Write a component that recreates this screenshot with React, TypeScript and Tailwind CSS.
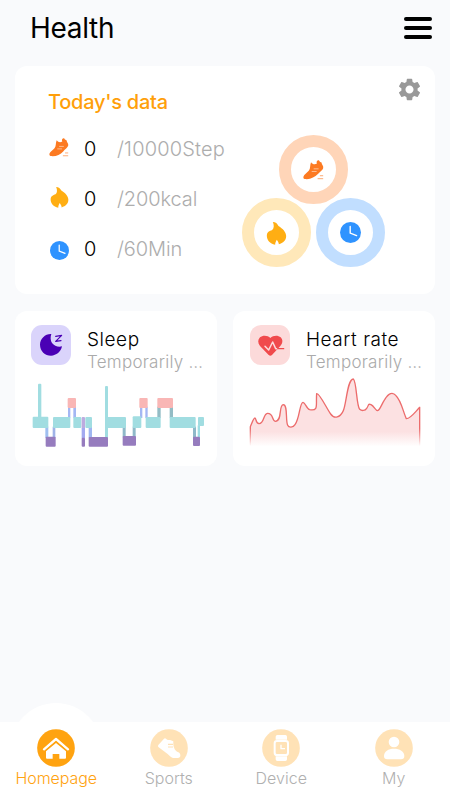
import type { ReactNode } from 'react'
import { MdSettings } from 'react-icons/md'

function ShoeIcon({ className }: { className: string }) {
  return (
    <svg viewBox="221 103 63 61" className={className}>
      <path
        d="M222 153 C224 147 232 143 238 136 C244 129 241 119 245 110 C250 117 257 118 263 114 C260 108 264 103 269 104 C271 110 275 109 277 111 C277 117 284 121 282 128 C280 134 272 139 266 146 C256 156 243 163 226 161 C222 160 221 157 222 153 Z"
        fill="#fc7a22"
      />
      <path d="M253 130 L268 130 M247 138 L262 138" stroke="#ffe3d0" strokeWidth="2" />
      <path d="M272 151 H282 M265 160 H282" stroke="#fc9a5a" strokeWidth="2.6" />
    </svg>
  )
}

function FlameIcon({ className }: { className: string }) {
  return (
    <svg viewBox="109 285 62 72" className={className}>
      <path
        d="M129 288 C137 288 143 293 146 300 C159 308 169 319 169 330 C169 343 160 351 147 355 C147 349 143 345 141 341 C138 346 136 350 136 356 C120 352 111 342 111 329 C111 318 119 315 127 312 C133 307 133 297 129 288 Z"
        fill="#ffae13"
      />
    </svg>
  )
}

function ClockIcon({ className }: { className: string }) {
  return (
    <svg viewBox="0 0 20 20" className={className}>
      <circle cx="10" cy="10" r="10" fill="#2f93ff" />
      <path d="M9.7 4.3 V10.5 L15.8 13" fill="none" stroke="#fff" strokeWidth="1.3" strokeLinecap="round" />
    </svg>
  )
}

const goals = [
  { icon: <ShoeIcon className="mb-1 h-[19px] w-5" />, target: '/10000Step', tracking: 'tracking-[0.15px]' },
  { icon: <FlameIcon className="mb-1 h-[22px] w-[19px]" />, target: '/200kcal', tracking: 'tracking-[-0.1px]' },
  { icon: <ClockIcon className="mt-0.5 h-[19px] w-[19px]" />, target: '/60Min', tracking: 'tracking-[-0.1px]' },
]

function Ring({ className, children }: { className: string; children: ReactNode }) {
  return (
    <div className={`flex h-[69px] w-[69px] shrink-0 items-center justify-center rounded-full border-[12.5px] ${className}`}>
      {children}
    </div>
  )
}

function TodayCard() {
  return (
    <section className="relative flex h-[228px] rounded-xl bg-white">
      <div className="w-[227px] pl-[33px] pt-[22px]">
        <h2 className="h-9 text-[20px] leading-[28px] font-medium tracking-[-0.25px] text-[#ff9f0a]">Today&apos;s data</h2>
        {goals.map((goal) => (
          <div key={goal.target} className="flex h-[50px] items-center whitespace-nowrap">
            <div className="flex w-[22px] justify-center">{goal.icon}</div>
            <span className="ml-[14px] w-[33px] text-[20px] font-[350] text-black">0</span>
            <span className={`text-[20px] font-light text-[#adadad] ${goal.tracking}`}>{goal.target}</span>
          </div>
        ))}
      </div>
      <div className="flex w-[143px] flex-col items-center pt-[69px]">
        <Ring className="border-[#ffd5b8]">
          <ShoeIcon className="h-5 w-[21px]" />
        </Ring>
        <div className="-mt-1.5 flex gap-[5px]">
          <Ring className="border-[#ffe8b9]">
            <FlameIcon className="h-6 w-[21px]" />
          </Ring>
          <Ring className="border-[#c1deff]">
            <ClockIcon className="h-[21px] w-[21px]" />
          </Ring>
        </div>
      </div>
      <button className="absolute right-[12.5px] top-[10px]" aria-label="Settings">
        <MdSettings className="h-[27px] w-[27px] text-[#999]" />
      </button>
    </section>
  )
}

function SleepIcon() {
  return (
    <svg viewBox="63 60 120 120" className="h-10 w-10 shrink-0 rounded-[11px] bg-[#dad4fb]">
      <path d="M124 87 C106 86 90 101 90 119 C90 138 105 152 123 152 C139 152 153 140 156 124 C145 127 133 123 126 114 C121 106 121 96 124 87 Z" fill="#4a00b5" />
      <path d="M137 94 L155 91 L137 109 L153 107" fill="none" stroke="#4a00b5" strokeWidth="3.5" strokeLinecap="round" strokeLinejoin="round" />
    </svg>
  )
}

function HeartIcon() {
  return (
    <svg viewBox="74 60 120 120" className="ml-px h-10 w-10 shrink-0 rounded-[11px] bg-[#fcdada]">
      <path d="M135 99 C128 91 112 90 104 97 C97 104 97 114 104 123 L130 150 Q135 155 140 150 L165 123 C173 114 173 104 166 97 C158 90 143 91 135 99 Z" fill="#f04a4c" />
      <path d="M119 124 L130 135 L142 111 L151 131 H175" fill="none" stroke="#fcdada" strokeWidth="4.5" strokeLinecap="round" strokeLinejoin="round" />
      <path d="M157 131 H175" stroke="#f04a4c" strokeWidth="4" strokeLinecap="round" />
    </svg>
  )
}

// x, y, width, height, colour
const sleepLinks: [number, number, number, number, string][] = [
  [76, 170, 9, 34, '#9fbff0'],
  [98, 170, 8, 34, '#9fb3e8'],
  [144, 110, 7, 34, '#a4b7f3'],
  [160, 110, 8, 34, '#a4b7f3'],
  [206, 170, 10, 34, '#9fb6f1'],
  [308, 170, 9, 32, '#8fb9c9'],
  [338, 170, 9, 32, '#8fb9c9'],
  [360, 110, 7, 34, '#a4b7f3'],
  [376, 110, 7, 34, '#a4b7f3'],
  [412, 110, 10, 34, '#93bcc5'],
  [449, 110, 10, 34, '#93bcc5'],
  [519, 170, 9, 34, '#8fb9c9'],
  [533, 166, 7, 36, '#9edde3'],
]

const sleepBlocks: [number, number, number, number, string][] = [
  [38, 140, 47, 34, '#a1dde1'],
  [54, 41, 10, 132, '#a1dde1'],
  [99, 141, 52, 33, '#a1dde1'],
  [160, 141, 24, 33, '#a1dde1'],
  [196, 141, 20, 33, '#a1dde1'],
  [255, 48, 9, 157, '#a1dde1'],
  [255, 141, 63, 33, '#a1dde1'],
  [338, 139, 26, 35, '#a1dde1'],
  [377, 141, 45, 33, '#a1dde1'],
  [449, 141, 78, 33, '#a1dde1'],
  [534, 141, 18, 27, '#a1dde1'],
  [143, 84, 25, 30, '#f9b6b5'],
  [358, 84, 25, 30, '#f9b6b5'],
  [412, 84, 47, 30, '#f9b6b5'],
  [77, 200, 30, 30, '#967cbe'],
  [206, 201, 58, 29, '#967cbe'],
  [308, 198, 40, 29, '#967cbe'],
  [519, 200, 21, 28, '#967cbe'],
]

function SleepChart() {
  return (
    <svg viewBox="30 24 525 216" className="ml-[15px] mt-1.5 h-[72px] w-[175px]">
      {sleepLinks.map(([x, y, w, h, fill]) => (
        <rect key={`${x}-${y}`} x={x} y={y} width={w} height={h} fill={fill} />
      ))}
      {sleepBlocks.map(([x, y, w, h, fill]) => (
        <rect key={`${x}-${y}`} x={x} y={y} width={w} height={h} rx="3" fill={fill} />
      ))}
      <rect x="185" y="141" width="10" height="35" rx="3" fill="#bdabdf" />
      <rect x="185" y="174" width="10" height="31" fill="#a3aaf0" />
      <rect x="185" y="203" width="10" height="27" rx="3" fill="#967cbe" />
    </svg>
  )
}

const heartLine =
  'M46 228 V170 C51 158 56 143 60 144 C64 146 62 160 72 161 C88 162 84 132 97 130 C117 129 109 152 121 154 C143 153 130 105 145 104 C159 105 151 151 158 166 C161 173 174 174 180 164 C194 146 194 97 204 97 C211 98 215 117 224 119 C252 124 242 105 245 71 C253 68 276 117 287 132 C299 149 315 141 324 124 C334 109 336 27 355 27 C365 34 364 106 374 118 C380 123 390 123 395 115 C402 106 398 100 408 104 C418 109 421 122 428 122 C435 120 440 102 449 89 C461 69 473 65 483 77 C499 92 504 125 514 146 C525 147 536 131 554 112 V228'

function HeartChart() {
  return (
    <svg viewBox="30 18 540 222" className="ml-3 mt-1 h-[74px] w-[180px]">
      <defs>
        <linearGradient id="heartFill" gradientUnits="userSpaceOnUse" x1="0" y1="185" x2="0" y2="230">
          <stop offset="0" stopColor="#fce1e2" />
          <stop offset="1" stopColor="#fce1e2" stopOpacity="0" />
        </linearGradient>
        <linearGradient id="heartStroke" gradientUnits="userSpaceOnUse" x1="0" y1="175" x2="0" y2="228">
          <stop offset="0" stopColor="#ec6c6c" />
          <stop offset="1" stopColor="#ec6c6c" stopOpacity="0" />
        </linearGradient>
      </defs>
      <path d={heartLine} fill="url(#heartFill)" stroke="url(#heartStroke)" strokeWidth="4" strokeLinejoin="round" />
    </svg>
  )
}

function MetricCard({ title, icon, children }: { title: string; icon: ReactNode; children: ReactNode }) {
  return (
    <section className="h-[155px] w-[202px] rounded-xl bg-white">
      <div className="flex h-[61px] gap-4 pl-4 pt-3.5">
        {icon}
        <div className="whitespace-nowrap">
          <h3 className="pt-[2px] text-[19px] leading-[25px] font-[350] tracking-[0.55px] text-black">{title}</h3>
          <p className="text-[17px] leading-[20px] font-light tracking-[0.25px] text-[#aaa]">Temporarily …</p>
        </div>
      </div>
      {children}
    </section>
  )
}

const tabs = [
  {
    label: 'Homepage',
    icon: (
      <>
        <path d="M132 163 L168 132 L204 163" fill="none" stroke="#fff" strokeWidth="7" strokeLinecap="round" strokeLinejoin="round" />
        <path d="M138 169 L168 144 L198 169 V188 Q198 191 195 191 H178 V177 H158 V191 H141 Q138 191 138 188 Z" fill="#fff" />
        <path d="M137 165.5 L168 140 L199 165.5" fill="none" stroke="#ffa310" strokeWidth="2.5" />
      </>
    ),
  },
  {
    label: 'Sports',
    icon: (
      <>
        <path d="M136 150 L153 131 Q156 128 159 131 Q163 136 168 135 Q173 134 177 137 L181 139 C180 154 184 166 194 171 Q203 173 202 184 Q200 189 195 189 H180 C173 187 169 181 163 176 L137 157 Q133 154 136 150 Z" fill="#fff" />
        <path d="M165 148 H180 M165 156 H180" stroke="#ffe2b6" strokeWidth="3.5" />
      </>
    ),
  },
  {
    label: 'Device',
    icon: (
      <>
        <path d="M152 134 V125 Q152 120 157 120 H181 Q186 120 186 125 V134 M152 184 V193 Q152 198 157 198 H181 Q186 198 186 193 V184" fill="#fff" />
        <rect x="149" y="138" width="40" height="42" rx="7" fill="#ffe2b6" stroke="#fff" strokeWidth="6" />
        <path d="M168 149 V161 H180" fill="none" stroke="#fff" strokeWidth="4" />
      </>
    ),
  },
  {
    label: 'My',
    icon: (
      <>
        <circle cx="168" cy="141" r="16" fill="#fff" />
        <path d="M138 183 C138 169 151 161 168 161 C185 161 199 169 199 183 Q199 193 189 193 H148 Q138 193 138 183 Z" fill="#fff" />
      </>
    ),
  },
]

function TabBar() {
  return (
    <nav className="relative mt-auto grid h-[78px] grid-cols-4 bg-white">
      <div className="absolute -top-[19px] left-[10px] h-[92px] w-[92px] rounded-full bg-white" />
      {tabs.map((tab, i) => (
        <div key={tab.label} className="relative flex flex-col items-center pt-[7px]">
          <svg viewBox="111 102 114 114" className="h-[38px] w-[38px]">
            <circle cx="168" cy="159" r="56.5" fill={i === 0 ? '#ffa310' : '#ffe2b6'} />
            {tab.icon}
          </svg>
          <span className={`text-[16px] leading-[22px] ${i === 0 ? 'font-[350] tracking-[-0.1px] text-[#ffa310]' : 'font-[350] text-[#b0b0b0]'}`}>
            {tab.label}
          </span>
        </div>
      ))}
    </nav>
  )
}

export default function App() {
  return (
    <div className="flex h-[800px] w-[450px] flex-col overflow-hidden bg-[#f9fafc] font-['Inter',sans-serif]">
      <header className="flex h-[66px] justify-between pl-[30px] pr-[18px]">
        <h1 className="pt-[8px] text-[28px] leading-[40px] tracking-[-0.3px] text-black">Health</h1>
        <button className="flex flex-col gap-[5.5px] pt-[17px]" aria-label="Menu">
          <span className="h-[3.7px] w-7 rounded-full bg-black" />
          <span className="h-[3.7px] w-7 rounded-full bg-black" />
          <span className="h-[3.7px] w-7 rounded-full bg-black" />
        </button>
      </header>
      <main className="flex flex-col gap-[17px] px-[15px]">
        <TodayCard />
        <div className="grid grid-cols-[202px_202px] gap-4">
          <MetricCard title="Sleep" icon={<SleepIcon />}>
            <SleepChart />
          </MetricCard>
          <MetricCard title="Heart rate" icon={<HeartIcon />}>
            <HeartChart />
          </MetricCard>
        </div>
      </main>
      <TabBar />
    </div>
  )
}
